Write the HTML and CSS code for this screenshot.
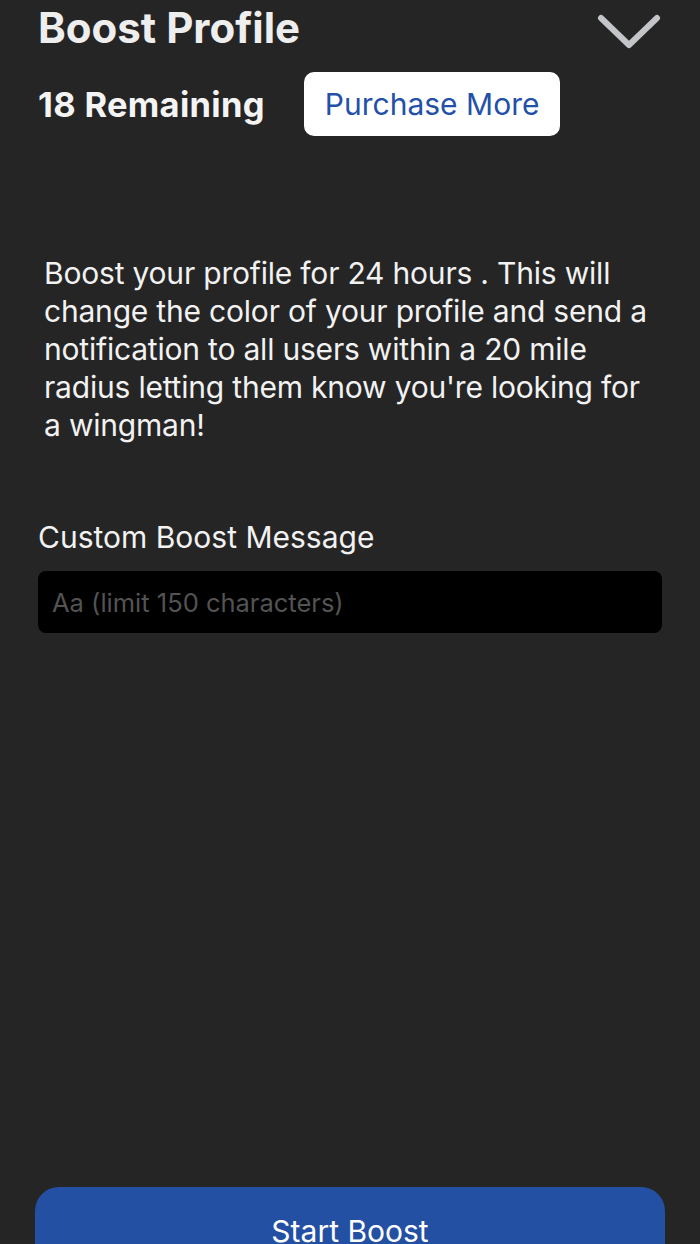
FILE: index.html
```html
<!DOCTYPE html>
<html>
<head>
  <title>Boost Profile</title>
  <link rel="stylesheet" href="styles.css">
</head>
<body>

<div class="sheet">
  <div class="header">
    <h1 class="title">Boost Profile</h1>
    <svg class="chevron" width="64" height="36" viewBox="0 0 64 36">
      <path d="M4 4 L32 31 L60 4" fill="none" stroke="#c3c5c9" stroke-width="6" stroke-linecap="round" stroke-linejoin="round"/>
    </svg>
  </div>

  <div class="remaining-row">
    <div class="remaining">18 Remaining</div>
    <button class="purchase">Purchase More</button>
  </div>

  <p class="about">Boost your profile for 24 hours . This will change the color of your profile and send a notification to all users within a 20 mile radius letting them know you're looking for a wingman!</p>

  <label class="field-label">Custom Boost Message</label>
  <input class="message" type="text" placeholder="Aa (limit 150 characters)">

  <div class="spacer"></div>

  <button class="start">Start Boost</button>
</div>

</body>
</html>
```

FILE: styles.css
```css
html, body {
  margin: 0;
  height: 100%;
}
body {
  background-color: #252525;
  font-family: Inter, "Liberation Sans", sans-serif;
  color: #f0f0f0;
  overflow: hidden;
}
.sheet {
  display: flex;
  flex-direction: column;
  height: 1244px;
  padding: 0 38px 0 38px;
  box-sizing: border-box;
}
.header {
  display: flex;
  justify-content: space-between;
  align-items: flex-start;
  height: 60px;
}
.title {
  margin: 2px 0 0 0;
  font-size: 42px;
  font-weight: 700;
  color: #eeeeee;
}
.chevron {
  margin: 14px 1px 0 0;
}
.remaining-row {
  display: flex;
  align-items: center;
  gap: 39px;
  margin-top: 12px;
}
.remaining {
  font-size: 34.5px;
  font-weight: 700;
  color: #f4f4f4;
  letter-spacing: 0.3px;
}
.purchase {
  background: #ffffff;
  border: none;
  border-radius: 10px;
  height: 64px;
  padding: 0 21px;
  font-family: inherit;
  font-size: 30px;
  color: #2450a8;
}
.about {
  margin: 118px 6px 0 6px;
  font-size: 30px;
  line-height: 38px;
  color: #f2f2f2;
  letter-spacing: -0.2px;
}
.field-label {
  margin-top: 75px;
  font-size: 30px;
  color: #f2f2f2;
}
.message {
  margin-top: 16px;
  height: 62px;
  width: 100%;
  box-sizing: border-box;
  background: #000000;
  border: none;
  border-radius: 8px;
  padding: 0 14px;
  font-family: inherit;
  font-size: 25.5px;
  color: #f2f2f2;
}
.message::placeholder {
  color: #535353;
}
.spacer {
  flex: 1;
}
.start {
  margin: 0 -3px;
  height: 100px;
  margin-bottom: -43px;
  background: #2450a4;
  border: none;
  border-radius: 24px;
  font-family: inherit;
  font-size: 30px;
  color: #ffffff;
  padding-bottom: 14px;
}
```
